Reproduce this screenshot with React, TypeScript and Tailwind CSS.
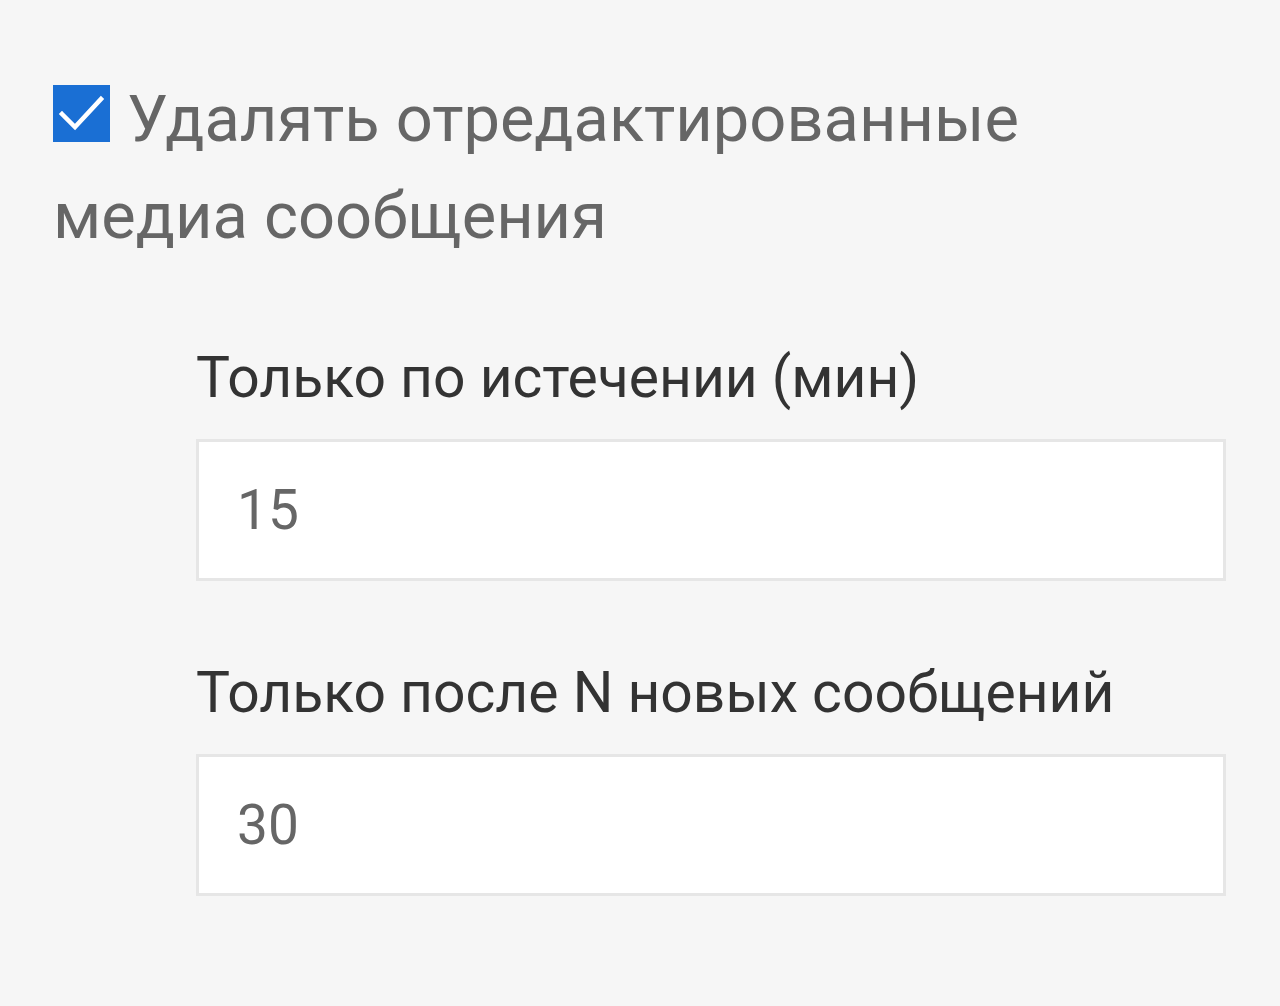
import { useState } from 'react';

export default function App() {
  const [deleteEdited, setDeleteEdited] = useState(true);
  const [minutes, setMinutes] = useState('15');
  const [count, setCount] = useState('30');

  return (
    <div
      className="min-h-[1006px] w-[1280px] bg-[#f6f6f6] pl-[53px] pr-[54px] pt-[71px]"
      style={{ fontFamily: 'Roboto, "Noto Sans", sans-serif' }}
    >
      {/* Checkbox row */}
      <label className="block cursor-pointer text-[65px] leading-[97px] text-[#666666]">
        <span
          onClick={() => setDeleteEdited(!deleteEdited)}
          className="mr-[17px] inline-block h-[57px] w-[57px] bg-[#1a6fd4] align-[-1px]"
        >
          {deleteEdited && (
            <svg className="block" width="57" height="57" viewBox="0 0 57 57" fill="none">
              <path d="M9 29L22 42L48 14" stroke="white" strokeWidth="4.5" strokeLinecap="square" />
            </svg>
          )}
        </span>
        Удалять отредактированные медиа сообщения
      </label>

      {/* Sub-settings */}
      <div className="mt-[78px] pl-[143px]">
        <div className="text-[57px] leading-[70px] text-[#333333]">Только по истечении (мин)</div>
        <input
          value={minutes}
          onChange={(e) => setMinutes(e.target.value)}
          className="mt-[26px] block h-[142px] w-full border-[3px] border-[#e6e6e6] bg-white px-[38px] text-[55px] text-[#666666] outline-none"
        />

        <div className="mt-[77px] text-[57px] leading-[70px] text-[#333333]">Только после N новых сообщений</div>
        <input
          value={count}
          onChange={(e) => setCount(e.target.value)}
          className="mt-[26px] block h-[142px] w-full border-[3px] border-[#e6e6e6] bg-white px-[38px] text-[55px] text-[#666666] outline-none"
        />
      </div>
    </div>
  );
}
